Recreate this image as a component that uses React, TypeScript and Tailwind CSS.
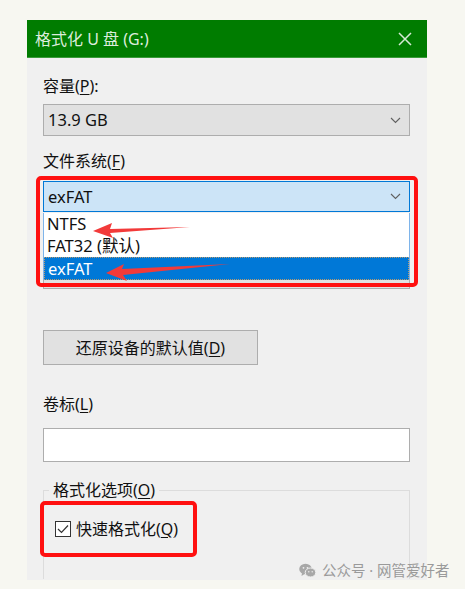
import React from "react";

const Chevron = () => (
  <svg width="11" height="7" viewBox="0 0 11 7" className="shrink-0">
    <path d="M1 1 L5.5 5.5 L10 1" fill="none" stroke="#606060" strokeWidth="1.1" />
  </svg>
);

const U = ({ children }: { children: React.ReactNode }) => (
  <span className="underline underline-offset-2 decoration-1">{children}</span>
);

export default function App() {
  return (
    <div className="relative w-[465px] h-[589px] overflow-hidden bg-[#f7f7f1] font-['Noto_Sans','Noto_Sans_CJK_SC',sans-serif] text-[16px] text-[#111111]">
      <div className="relative ml-[27px] mt-[20px] w-[400px] h-[560px] bg-[#f0f0f0] flex flex-col">
        {/* title bar */}
        <div className="h-[38px] bg-[#007c00] border-b border-[#3a9b3a] flex items-center justify-between pl-[8px] pr-[15px]">
          <span className="text-[#dcecdc] text-[16px] leading-5">格式化 U 盘 (G:)</span>
          <svg width="14" height="14" viewBox="0 0 14 14">
            <path d="M1 1 L13 13 M13 1 L1 13" stroke="#d6ead6" strokeWidth="1.5" />
          </svg>
        </div>

        <div className="flex flex-col px-[16px] pr-[17px]">
          <div className="mt-[18px] h-5 leading-5">
            容量(<U>P</U>):
          </div>
          <div className="mt-[8px] h-[32px] bg-[#e1e1e1] border border-[#adadad] flex items-center justify-between pl-[4px] pr-[8px]">
            <span className="leading-5 text-[16.5px]">13.9 GB</span>
            <Chevron />
          </div>

          <div className="mt-[15px] h-5 leading-5">
            文件系统(<U>F</U>)
          </div>
          <div className="mt-[10px] h-[31px] bg-[#cce4f7] border border-[#0078d7] flex items-center justify-between pl-[4px] pr-[8px]">
            <span className="leading-5 text-[16.5px]">exFAT</span>
            <Chevron />
          </div>

          <div className="mt-[13px] h-5" />
          <div className="mt-[12px] h-[32px] bg-[#e1e1e1] border border-[#adadad]" />

          <div className="mt-[41px] h-[35px] w-[215px] bg-[#e1e1e1] border border-[#adadad] flex items-center justify-center">
            <span className="leading-5">
              还原设备的默认值(<U>D</U>)
            </span>
          </div>

          <div className="mt-[29px] h-5 leading-5">
            卷标(<U>L</U>)
          </div>
          <div className="mt-[14px] h-[34px] bg-white border border-[#adadad]" />

          <div className="relative mt-[28px] h-[89px] border-t border-l border-r border-[#dcdcdc]">
            <div className="absolute left-[5px] top-[-11px] px-[4px] bg-[#f0f0f0] leading-5">
              格式化选项(<U>O</U>)
            </div>
            <div className="mt-[28px] ml-[11px] flex items-center gap-[5px]">
              <div className="w-[16px] h-[16px] border border-[#333333] bg-white flex items-center justify-center">
                <svg width="12" height="10" viewBox="0 0 12 10">
                  <path d="M1 5 L4.5 8.5 L11 1.5" fill="none" stroke="#333333" strokeWidth="1.2" />
                </svg>
              </div>
              <span className="leading-5">
                快速格式化(<U>Q</U>)
              </span>
            </div>
          </div>
        </div>

        {/* opened dropdown list */}
        <div className="absolute left-[16px] top-[193px] w-[367px] h-[67px] bg-white border-l border-r border-[#7eb4ea] flex flex-col text-[16.5px]">
          <div className="h-[22px] pl-[3px] flex items-center leading-5">NTFS</div>
          <div className="h-[22px] pl-[3px] flex items-center leading-5">FAT32 (默认)</div>
          <div className="h-[23px] pl-[3px] flex items-center leading-5 bg-[#0078d7] text-white border border-dotted border-[#b89a70]">
            exFAT
          </div>
        </div>

        {/* red annotation boxes */}
        <div className="absolute left-[9px] top-[156px] w-[382px] h-[111px] border-[4px] border-[#ff1010] rounded-[5px]" />
        <div className="absolute left-[13px] top-[481px] w-[157px] h-[56px] border-[4px] border-[#ff1010] rounded-[5px]" />
      </div>

      {/* arrows */}
      <svg className="absolute left-0 top-0 pointer-events-none" width="465" height="589">
        <polygon points="93,231 112,223 110,229 190,227 110,233 113,238" fill="#f23a3a" />
        <polygon points="106,273 124,264 122,269 230,264 123,275 127,281" fill="#f23a3a" />
      </svg>

      {/* watermark */}
      <div className="absolute left-[299px] top-[560px] flex items-center gap-[6px] text-[#9a9a9a] text-[14.5px] leading-5">
        <svg width="17" height="15" viewBox="0 0 17 15">
          <ellipse cx="6.5" cy="6" rx="6.3" ry="5.3" fill="#a8a8a8" />
          <path d="M3 10 L2.5 13 L6 10.8 Z" fill="#a8a8a8" />
          <ellipse cx="11.5" cy="9.5" rx="5.3" ry="4.5" fill="#a8a8a8" stroke="#f0f0f0" strokeWidth="1" />
          <circle cx="4.5" cy="4.8" r="0.9" fill="#f0f0f0" />
          <circle cx="8.5" cy="4.8" r="0.9" fill="#f0f0f0" />
          <circle cx="9.8" cy="8.8" r="0.7" fill="#f0f0f0" />
          <circle cx="13.2" cy="8.8" r="0.7" fill="#f0f0f0" />
        </svg>
        <span>公众号 · 网管爱好者</span>
      </div>
    </div>
  );
}
